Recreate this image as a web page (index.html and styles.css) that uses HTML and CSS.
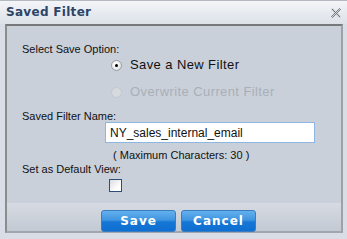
FILE: index.html
```html
<!DOCTYPE html>
<html lang="en">
<head>
  <meta charset="UTF-8">
  <title>Saved Filter</title>
  <link rel="stylesheet" href="styles.css">
</head>
<body>

<div class="dialog">
  <div class="titlebar">
    <span class="title">Saved Filter</span>
    <svg class="close" width="10" height="10" viewBox="0 0 10 10">
      <defs>
        <pattern id="checker" width="2" height="2" patternUnits="userSpaceOnUse">
          <rect width="2" height="2" fill="#d2d4d8"/>
          <rect width="1" height="1" fill="#6f7277"/>
          <rect x="1" y="1" width="1" height="1" fill="#6f7277"/>
        </pattern>
      </defs>
      <polygon fill="url(#checker)" points="0,1.5 1.5,0 5,3.5 8.5,0 10,1.5 6.5,5 10,8.5 8.5,10 5,6.5 1.5,10 0,8.5 3.5,5"/>
    </svg>
  </div>

  <div class="panel">
    <div class="content">
      <div class="label">Select Save Option:</div>
      <label class="option">
        <span class="radio checked"></span>
        <span>Save a New Filter</span>
      </label>
      <label class="option disabled">
        <span class="radio"></span>
        <span>Overwrite Current Filter</span>
      </label>

      <div class="label name-label">Saved Filter Name:</div>
      <input class="name-input" type="text" value="NY_sales_internal_email">
      <div class="hint">( Maximum Characters: 30 )</div>

      <div class="label">Set as Default View:</div>
      <span class="checkbox"></span>
    </div>

    <div class="footer">
      <button class="btn">Save</button>
      <button class="btn">Cancel</button>
    </div>
  </div>
</div>

</body>
</html>
```

FILE: styles.css
```css
body {
  margin: 0;
  padding: 0;
  background: #dbe0e8;
  font-family: "Liberation Sans", Arial, sans-serif;
}
.dialog {
  width: 347px;
  height: 239px;
  box-sizing: border-box;
  border-top: 1px solid #b4b9c0;
  background: linear-gradient(#f3f5f8, #dce1e9 23px, #d9dee6 23px);
}
.titlebar {
  height: 23px;
  display: flex;
  justify-content: space-between;
  align-items: center;
  padding: 0 6px 0 6px;
}
.title {
  font-family: "DejaVu Sans", Verdana, sans-serif;
  font-weight: bold;
  font-size: 12px;
  line-height: 23px;
  color: #2b4468;
  letter-spacing: 0.3px;
}
.close {
  display: block;
  margin-top: 1px;
}
.panel {
  margin: 0 4px 0 5px;
  border-top: 2px solid #76787b;
  border-left: 2px solid #8a8c90;
  border-right: 2px solid #9ea1a5;
  border-bottom: 2px solid #a2a5a9;
}
.content {
  height: 177px;
  box-sizing: border-box;
  padding: 16px 0 0 15px;
  background: #c9d0da;
  font-size: 11px;
  color: #111;
}
.label {
  line-height: 14px;
}
.option {
  display: flex;
  align-items: center;
  gap: 8px;
  margin: 1px 0 0 89px;
  font-size: 13px;
  line-height: 16px;
  color: #111;
  letter-spacing: 0.4px;
}
.option.disabled {
  margin-top: 11px;
  color: #a9afb8;
}
.radio {
  width: 11px;
  height: 11px;
  box-sizing: border-box;
  border-radius: 50%;
  border: 1px solid #9a9da2;
  background: radial-gradient(circle at 40% 35%, #ffffff, #d9dbde);
  position: relative;
}
.radio.checked::after {
  content: "";
  position: absolute;
  left: 3px;
  top: 3px;
  width: 3px;
  height: 3px;
  border-radius: 50%;
  background: #000;
}
.disabled .radio {
  border-color: #c3c7cc;
  background: #d6d9dd;
}
.name-label {
  margin-top: 10px;
  line-height: 12px;
}
.name-input {
  display: block;
  margin: 0 0 0 83px;
  width: 210px;
  height: 21px;
  box-sizing: border-box;
  border: 1px solid #8db6e0;
  background: #fff;
  padding: 0 4px;
  font-family: "Liberation Sans", Arial, sans-serif;
  font-size: 12px;
  color: #111;
  outline: none;
}
.hint {
  margin: 6px 0 0 91px;
  line-height: 13px;
}
.checkbox {
  display: block;
  margin: 3px 0 0 87px;
  width: 13px;
  height: 13px;
  box-sizing: border-box;
  border: 1px solid #2a4d7a;
  background: linear-gradient(135deg, #d9dce0, #ffffff 70%);
}
.footer {
  height: 28px;
  box-sizing: border-box;
  padding: 7px 0 0 94px;
  display: flex;
  gap: 5px;
  background: linear-gradient(#d6dbe3, #c3c9d2);
}
.btn {
  width: 75px;
  height: 22px;
  padding: 0;
  border: 1px solid #3a7cc0;
  border-radius: 3px;
  background: linear-gradient(#64b0ee, #3f95e0 45%, #1676d6 55%, #0f6fd0);
  color: #fff;
  font-family: "DejaVu Sans", Verdana, sans-serif;
  font-weight: bold;
  font-size: 12px;
  letter-spacing: 1px;
  cursor: pointer;
}
```
